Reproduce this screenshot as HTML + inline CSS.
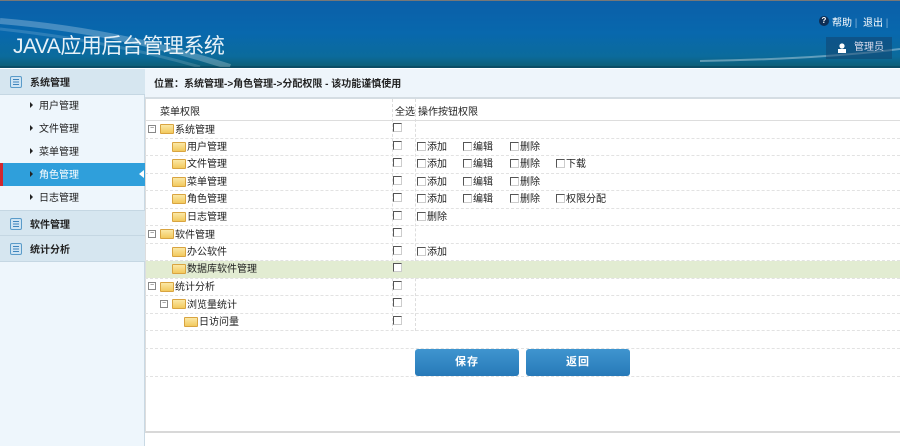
<!DOCTYPE html><html><head><meta charset="utf-8"><style>
*{margin:0;padding:0;box-sizing:border-box}
body{width:900px;height:446px;overflow:hidden;background:#fff;font-family:"Liberation Sans","Noto Sans CJK SC",sans-serif;font-size:10px;color:#222;position:relative}
.a{position:absolute}
#hd{left:0;top:0;width:900px;height:68px;background:linear-gradient(180deg,#0b5fa9 0%,#0868ad 50%,#0b6b9c 85%,#0d5f78 100%);border-bottom:2px solid #0b4d66;border-top:1px solid #777}
.fold{width:14px;height:10px;background:linear-gradient(#fbe8a6,#f2c95e);border:1px solid #d9a440;border-radius:1px}
.cb{width:9px;height:9px;border:1px solid #555;border-right-color:#ccc;border-bottom-color:#ccc;background:#fff}
.row{left:145px;width:755px;height:17.5px;border-bottom:1px dashed #e2e2e2}
.side{left:0;width:145px}
.sh{background:#d6e6f0;height:26px;border-bottom:1px solid #c5d7e3;font-weight:bold;font-size:10px;color:#222}
.ic{position:absolute;left:10px;top:7px;width:12px;height:12px;border:1px solid #5a9bc9;background:#cfe4f3;border-radius:2px}
.ic:after{content:"";position:absolute;left:2px;top:2px;width:6px;height:6px;background:repeating-linear-gradient(#3f85bd 0 1px,transparent 1px 2.5px)}
.btn{top:349px;height:27px;width:104px;background:linear-gradient(#3f95cf,#2779b8);border-radius:3px;color:#fff;font-weight:bold;font-size:11px;text-align:center;line-height:27px;letter-spacing:1px}
.mi{left:30px;font-size:10px}
.mi:before{content:"";display:inline-block;border-left:3px solid #222;border-top:3px solid transparent;border-bottom:3px solid transparent;margin-right:6px;vertical-align:1px}
.pm{width:8px;height:8px;border:1px solid #888;font-size:7px;line-height:6px;text-align:center;color:#555}
.ck{display:inline-block;vertical-align:-1px;margin-right:1px}
</style></head><body>
<div id="hd" class="a">
<svg class="a" style="left:0;top:0" width="900" height="66"><path d="M0 20 Q120 30 230 66" stroke="rgba(255,255,255,.25)" stroke-width="6" fill="none"/><path d="M0 28 Q110 40 200 66" stroke="rgba(255,255,255,.15)" stroke-width="3" fill="none"/><path d="M700 60 Q820 58 900 48" stroke="rgba(255,255,255,.35)" stroke-width="2" fill="none"/></svg>
<div class="a" style="left:13px;top:29px;font-size:21px;color:#e8f2f8;letter-spacing:-0.5px">JAVA应用后台管理系统</div>
<div class="a" style="left:819px;top:15px;width:10px;height:10px;border-radius:50%;background:#0d2e55;color:#fff;font-size:8px;font-weight:bold;text-align:center;line-height:10px">?</div>
<div class="a" style="left:832px;top:13px;color:#fff;font-size:10px">帮助 <span style="color:#7fb0d8">|</span> &nbsp;退出 <span style="color:#7fb0d8">|</span></div>
<div class="a" style="left:826px;top:36px;width:66px;height:22px;background:rgba(20,60,100,.45);color:#dde;font-size:10px;line-height:22px;padding-left:28px">管理员</div>
<svg class="a" style="left:837px;top:42px" width="10" height="10"><circle cx="5" cy="3" r="2.6" fill="#fff"/><rect x="1" y="6" width="8" height="4" fill="#fff"/></svg>
</div>
<div class="a" style="left:0;top:69px;width:145px;height:377px;background:#eef6fc;border-right:1px solid #c9d9e4"></div>
<div class="a side sh" style="top:69px"><span class="ic"></span><span class="a" style="left:30px;top:5px">系统管理</span></div>
<div class="a mi" style="top:97px">用户管理</div>
<div class="a mi" style="top:120px">文件管理</div>
<div class="a mi" style="top:143px">菜单管理</div>
<div class="a" style="left:0;top:163px;width:145px;height:23px;background:#2f9fdb;border-left:3px solid #d0272f"></div>
<div class="a" style="left:139px;top:170px;border-right:5px solid #fff;border-top:4px solid transparent;border-bottom:4px solid transparent"></div>
<div class="a mi" style="top:166px;color:#fff">角色管理</div>
<div class="a mi" style="top:189px">日志管理</div>
<div class="a side sh" style="top:210px;border-top:1px solid #c5d7e3"><span class="ic"></span><span class="a" style="left:30px;top:5px">软件管理</span></div>
<div class="a side sh" style="top:236px"><span class="ic"></span><span class="a" style="left:30px;top:5px">统计分析</span></div>
<div class="a" style="left:145px;top:69px;width:755px;height:30px;background:#eef5fb;border-bottom:2px solid #d5dde3"></div>
<div class="a" style="left:154px;top:75px;font-weight:bold;font-size:10px">位置：系统管理-&gt;角色管理-&gt;分配权限 - 该功能谨慎使用</div>
<div class="a" style="left:145px;top:99px;width:755px;height:334px;border-left:1px solid #ddd;border-bottom:2px solid #d8d8d8"></div>
<div class="a" style="left:145px;top:99px;width:755px;height:22px;border-bottom:1px solid #ddd"></div>
<div class="a" style="left:160px;top:103px">菜单权限</div>
<div class="a" style="left:395px;top:103px">全选</div>
<div class="a" style="left:418px;top:103px">操作按钮权限</div>
<div class="a" style="left:392px;top:99px;height:232px;border-left:1px dashed #ddd"></div>
<div class="a" style="left:415px;top:99px;height:232px;border-left:1px dashed #ddd"></div>
<div class="a" style="left:146px;top:261px;width:754px;height:17px;background:#e2ecd2"></div>
<div class="a row" style="top:121px"></div><div class="a row" style="top:138.5px"></div><div class="a row" style="top:156px"></div><div class="a row" style="top:173.5px"></div><div class="a row" style="top:191px"></div><div class="a row" style="top:208.5px"></div><div class="a row" style="top:226px"></div><div class="a row" style="top:243.5px"></div><div class="a row" style="top:261px"></div><div class="a row" style="top:278.5px"></div><div class="a row" style="top:296px"></div><div class="a row" style="top:313.5px"></div><div class="a row" style="top:331px"></div><div class="a row" style="top:348px;height:29px"></div>
<div class="a pm" style="left:148px;top:125px">−</div><div class="a fold" style="left:160px;top:124px"></div><div class="a" style="left:175px;top:121px">系统管理</div>
<div class="a fold" style="left:172px;top:142px"></div><div class="a" style="left:187px;top:138px">用户管理</div>
<div class="a fold" style="left:172px;top:159px"></div><div class="a" style="left:187px;top:155px">文件管理</div>
<div class="a fold" style="left:172px;top:177px"></div><div class="a" style="left:187px;top:173px">菜单管理</div>
<div class="a fold" style="left:172px;top:194px"></div><div class="a" style="left:187px;top:190px">角色管理</div>
<div class="a fold" style="left:172px;top:212px"></div><div class="a" style="left:187px;top:208px">日志管理</div>
<div class="a pm" style="left:148px;top:230px">−</div><div class="a fold" style="left:160px;top:229px"></div><div class="a" style="left:175px;top:226px">软件管理</div>
<div class="a fold" style="left:172px;top:247px"></div><div class="a" style="left:187px;top:243px">办公软件</div>
<div class="a fold" style="left:172px;top:264px"></div><div class="a" style="left:187px;top:260px">数据库软件管理</div>
<div class="a pm" style="left:148px;top:282px">−</div><div class="a fold" style="left:160px;top:282px"></div><div class="a" style="left:175px;top:278px">统计分析</div>
<div class="a pm" style="left:160px;top:300px">−</div><div class="a fold" style="left:172px;top:299px"></div><div class="a" style="left:187px;top:296px">浏览量统计</div>
<div class="a fold" style="left:184px;top:317px"></div><div class="a" style="left:199px;top:313px">日访问量</div>
<div class="a cb" style="left:393px;top:123px"></div><div class="a cb" style="left:393px;top:141px"></div><div class="a cb" style="left:393px;top:158px"></div><div class="a cb" style="left:393px;top:176px"></div><div class="a cb" style="left:393px;top:193px"></div><div class="a cb" style="left:393px;top:211px"></div><div class="a cb" style="left:393px;top:228px"></div><div class="a cb" style="left:393px;top:246px"></div><div class="a cb" style="left:393px;top:263px"></div><div class="a cb" style="left:393px;top:281px"></div><div class="a cb" style="left:393px;top:298px"></div><div class="a cb" style="left:393px;top:316px"></div>
<div class="a" style="left:417px;top:138px"><span class="cb ck"></span>添加</div>
<div class="a" style="left:463px;top:138px"><span class="cb ck"></span>编辑</div>
<div class="a" style="left:510px;top:138px"><span class="cb ck"></span>删除</div>
<div class="a" style="left:417px;top:155px"><span class="cb ck"></span>添加</div>
<div class="a" style="left:463px;top:155px"><span class="cb ck"></span>编辑</div>
<div class="a" style="left:510px;top:155px"><span class="cb ck"></span>删除</div>
<div class="a" style="left:556px;top:155px"><span class="cb ck"></span>下载</div>
<div class="a" style="left:417px;top:173px"><span class="cb ck"></span>添加</div>
<div class="a" style="left:463px;top:173px"><span class="cb ck"></span>编辑</div>
<div class="a" style="left:510px;top:173px"><span class="cb ck"></span>删除</div>
<div class="a" style="left:417px;top:190px"><span class="cb ck"></span>添加</div>
<div class="a" style="left:463px;top:190px"><span class="cb ck"></span>编辑</div>
<div class="a" style="left:510px;top:190px"><span class="cb ck"></span>删除</div>
<div class="a" style="left:556px;top:190px"><span class="cb ck"></span>权限分配</div>
<div class="a" style="left:417px;top:208px"><span class="cb ck"></span>删除</div>
<div class="a" style="left:417px;top:243px"><span class="cb ck"></span>添加</div>
<div class="a btn" style="left:415px">保存</div>
<div class="a btn" style="left:526px">返回</div>
</body></html>
